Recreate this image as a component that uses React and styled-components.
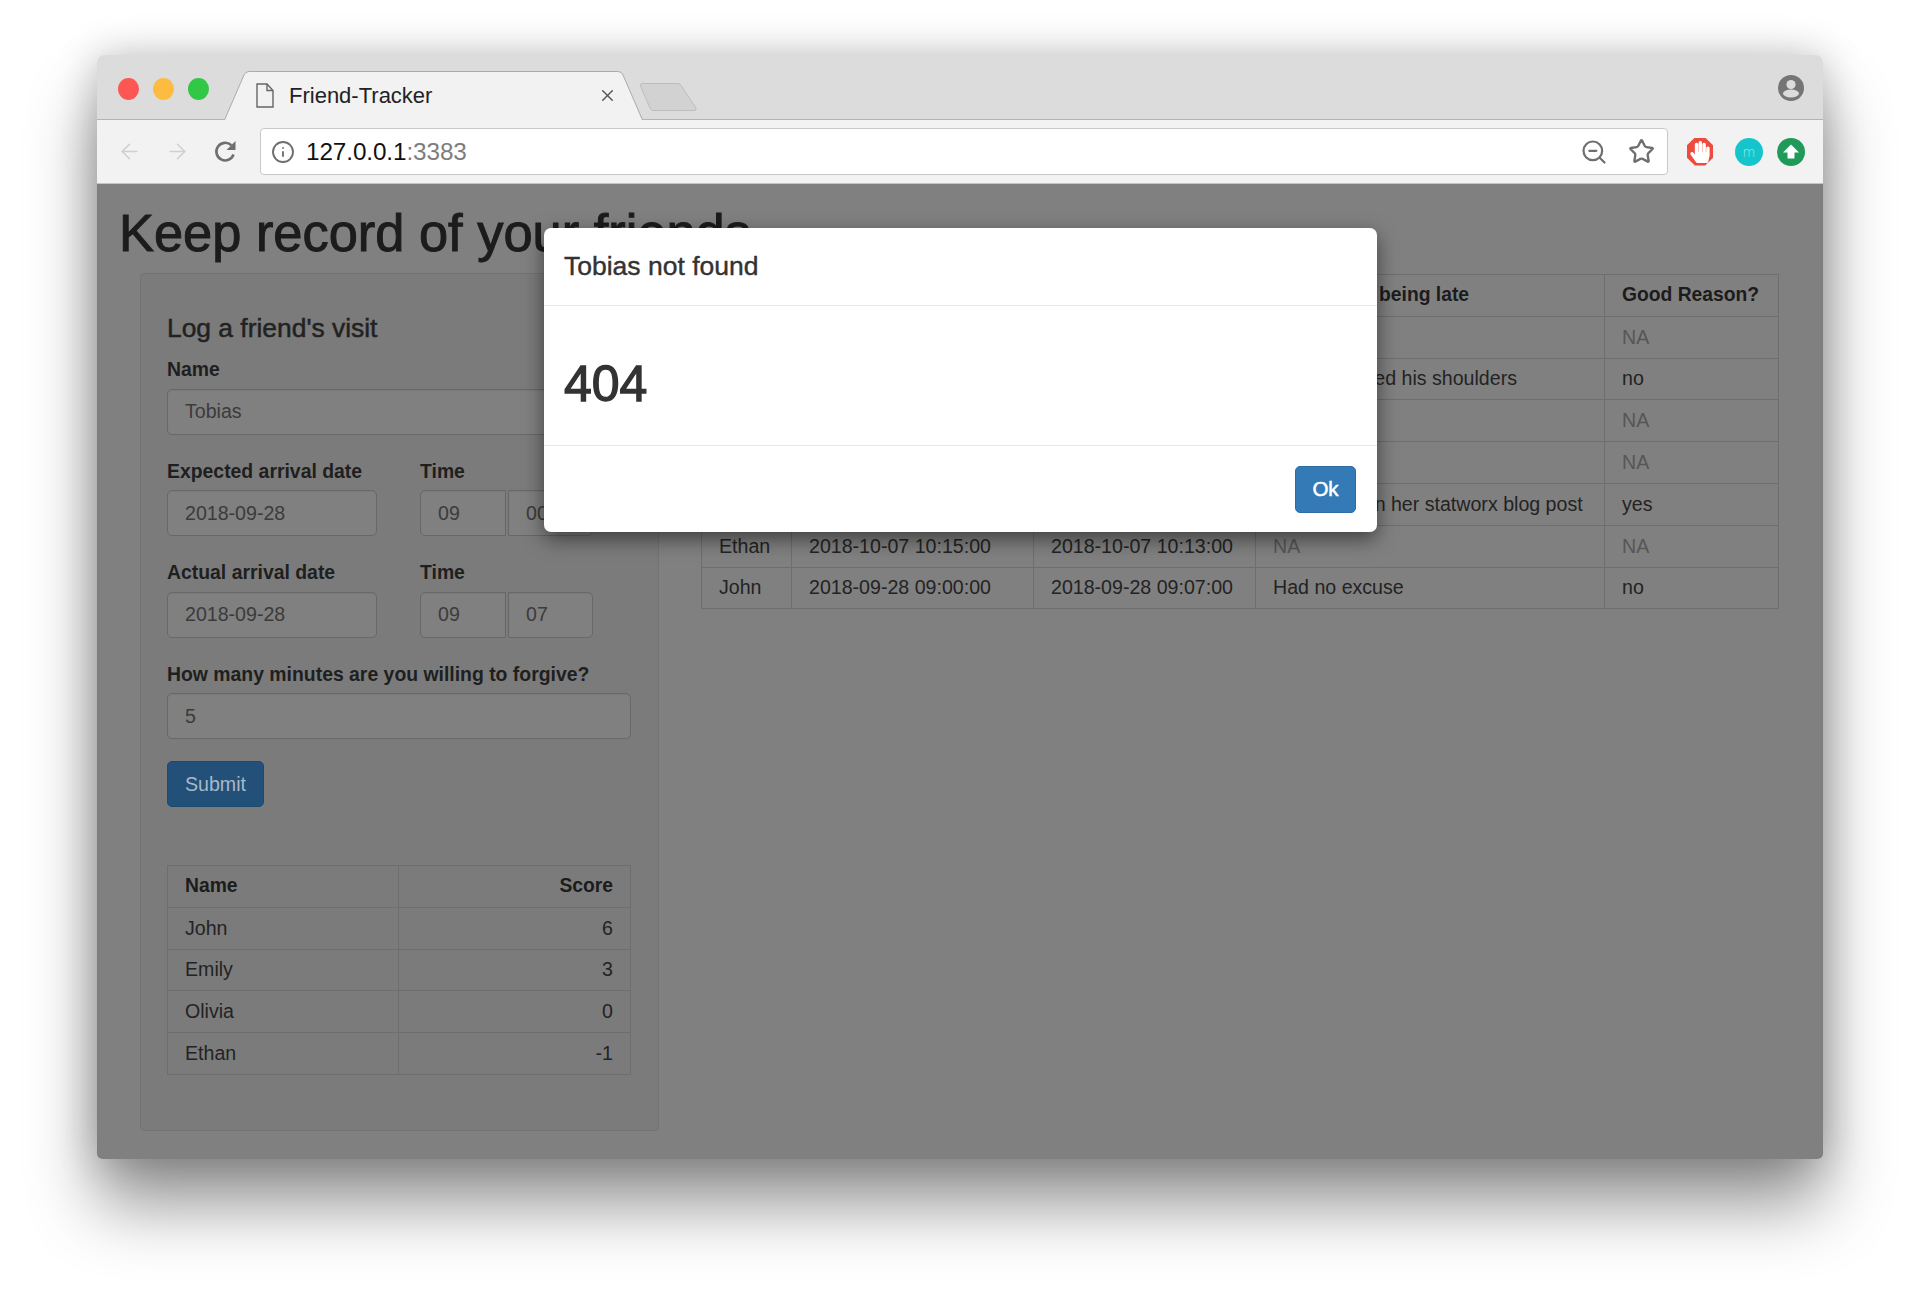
import React from "react";
import styled, { createGlobalStyle } from "styled-components";
import { ArrowLeft, ArrowRight, Info, ZoomOut, Star, X } from "lucide-react";
import { FaHandPaper } from "react-icons/fa";

const GlobalStyle = createGlobalStyle`
  html, body {
    margin: 0;
    background: #ffffff;
    font-family: "Liberation Sans", Arial, sans-serif;
    color: #1f1f1f;
  }
  * { box-sizing: border-box; }
`;

const Stage = styled.div`
  height: 1298px;
  padding: 55px 97px 139px;
  overflow: hidden;
`;

const BrowserWindow = styled.div`
  position: relative;
  height: 1104px;
  border-radius: 7px 7px 5px 5px;
  overflow: hidden;
`;

const WindowShadow = styled.div`
  border-radius: 7px 7px 5px 5px;
  box-shadow: 0 46px 68px rgba(0, 0, 0, 0.42), 0 0 40px rgba(0, 0, 0, 0.22);
`;

const TitleBar = styled.div`
  display: flex;
  align-items: center;
  height: 65px;
  padding: 0 19px 0 21px;
  background: #dcdcdc;
  border-bottom: 1px solid #b4b4b4;
`;

const Light = styled.span`
  width: 21px;
  height: 22px;
  margin: 4px 14px 0 0;
  border-radius: 50%;
  background: ${(p) => p.$color};
`;

const Tab = styled.div`
  position: relative;
  display: flex;
  align-items: center;
  align-self: flex-end;
  width: 419px;
  height: 49px;
  margin: 0 0 -1px 1px;
  padding: 0 26px 0 32px;
  font-size: 22px;
  color: #222222;
`;

const TabShape = styled.svg`
  position: absolute;
  left: 0;
  top: 0;
`;

const TabIcon = styled.svg`
  position: relative;
  flex: none;
  margin-right: 15px;
`;

const TabTitle = styled.span`
  position: relative;
`;

const TabClose = styled.span`
  position: relative;
  display: flex;
  margin-left: auto;
  color: #555555;
`;

const NewTab = styled.svg`
  align-self: flex-end;
  margin: 0 0 8px -3px;
`;

const Profile = styled.svg`
  margin: 2px 0 0 auto;
`;

const ToolBar = styled.div`
  display: flex;
  align-items: center;
  height: 64px;
  padding-left: 8px;
  background: #f2f2f2;
  border-bottom: 1px solid #c4c4c4;
`;

const NavButton = styled.span`
  display: flex;
  justify-content: center;
  width: 48px;
  color: ${(p) => (p.$off ? "#cfcfcf" : "#6f6f6f")};
`;

const AddressBar = styled.div`
  display: flex;
  flex: 1;
  align-items: center;
  height: 47px;
  margin-left: 11px;
  padding: 0 12px 0 10px;
  background: #ffffff;
  border: 1px solid #c8c8c8;
  border-radius: 4px;
  color: #6f6f6f;
`;

const Url = styled.span`
  margin: 0 auto 0 11px;
  font-size: 24.3px;
  letter-spacing: -0.1px;
  color: #111111;
`;

const UrlPort = styled.span`
  color: #7d7d7d;
`;

const BarAction = styled.span`
  display: flex;
  margin-left: ${(p) => p.$gap || 0}px;
`;

const Extensions = styled.div`
  display: flex;
  align-items: center;
  gap: 14px;
  margin-left: 19px;
  padding-right: 18px;
`;

const AdBlock = styled.span`
  display: flex;
  align-items: center;
  justify-content: center;
  width: 26px;
  height: 28px;
  margin-right: 8px;
  background: #ee4b40;
  clip-path: polygon(30% 0, 70% 0, 100% 28%, 100% 72%, 70% 100%, 30% 100%, 0 72%, 0 28%);
  color: #ffffff;
`;

const TealBadge = styled.span`
  display: flex;
  align-items: center;
  justify-content: center;
  width: 28px;
  height: 28px;
  border-radius: 50%;
  background: #14c6cb;
  color: #8fe6e8;
  font-family: "Open Sans", sans-serif;
  font-size: 14px;
  font-weight: 300;
`;

const Page = styled.div`
  height: 975px;
  padding: 23px 45px 0 22px;
  background: #808080;
`;

const Heading = styled.h1`
  margin: 0 0 14px;
  font-size: 52.4px;
  line-height: 52px;
  font-weight: 400;
  color: #1c1c1c;
  -webkit-text-stroke: 1px #1c1c1c;
`;

const Columns = styled.div`
  display: grid;
  grid-template-columns: 519px 1077px;
  gap: 42px;
  margin-left: 21px;
`;

const Panel = styled.section`
  padding: 39px 27px 55px 26px;
  background: #7b7b7b;
  border: 1px solid #737373;
  border-radius: 4px;
`;

const PanelTitle = styled.h4`
  margin: 0 0 16px;
  font-size: 26.4px;
  line-height: 30px;
  font-weight: 400;
  color: #222222;
  -webkit-text-stroke: 0.5px #222222;
`;

const Field = styled.div`
  margin-bottom: 26px;
`;

const FieldRow = styled.div`
  display: grid;
  grid-template-columns: 210px 173px;
  gap: 43px;
  margin-bottom: 26px;
`;

const Label = styled.label`
  display: block;
  margin-bottom: 9.5px;
  font-size: 19.4px;
  line-height: 20px;
  font-weight: 700;
  color: #1f1f1f;
`;

const Input = styled.input`
  display: block;
  width: 100%;
  height: 46px;
  padding: 0 17px;
  background: #808080;
  border: 1px solid #686868;
  border-radius: ${(p) => p.$radius || "5px"};
  box-shadow: inset 0 1px 1px rgba(0, 0, 0, 0.05);
  font-family: inherit;
  font-size: 19.6px;
  color: #3b3b3b;
  outline: none;
`;

const TimeInputs = styled.div`
  display: grid;
  grid-template-columns: 86px 85px;
  gap: 2px;
`;

const SubmitButton = styled.button`
  display: block;
  width: 97px;
  height: 46px;
  margin: -4px 0 58px;
  padding: 0;
  background: #225078;
  border: 1px solid #1f4a6c;
  border-radius: 5px;
  font-family: inherit;
  font-size: 19.6px;
  color: #a9b8c7;
`;

const DataTable = styled.table`
  width: 100%;
  table-layout: fixed;
  border-collapse: collapse;
  font-size: 19.6px;
`;

const HeadCell = styled.th`
  height: 41.8px;
  padding: 0 17px;
  border: 1px solid #6e6e6e;
  font-size: 19.3px;
  font-weight: 700;
  color: #1c1c1c;
  text-align: ${(p) => (p.$right ? "right" : "left")};
  white-space: nowrap;
`;

const Cell = styled.td`
  height: 41.8px;
  padding: 0 17px;
  border: 1px solid #6e6e6e;
  color: ${(p) => (p.$na ? "#565656" : "#232323")};
  text-align: ${(p) => (p.$right ? "right" : "left")};
  white-space: nowrap;
`;

const Col = styled.col`
  width: ${(p) => p.$width}px;
`;

const TableColumn = styled.div`
  padding-top: 1px;
`;

const Modal = styled.div`
  position: absolute;
  left: 447px;
  top: 173px;
  display: flex;
  flex-direction: column;
  width: 833px;
  height: 304px;
  background: #ffffff;
  border-radius: 7px;
  box-shadow: 0 7px 20px rgba(0, 0, 0, 0.5);
`;

const ModalHeader = styled.div`
  display: flex;
  align-items: center;
  height: 78px;
  padding: 0 20px;
  border-bottom: 1px solid #e7e7e7;
  font-size: 26.5px;
  color: #333333;
  -webkit-text-stroke: 0.4px #333333;
`;

const ModalBody = styled.div`
  display: flex;
  align-items: center;
  height: 140px;
  padding: 17px 20px 0;
  border-bottom: 1px solid #e7e7e7;
`;

const ModalCode = styled.h3`
  margin: 0;
  font-size: 50px;
  line-height: 52px;
  font-weight: 400;
  color: #333333;
  -webkit-text-stroke: 1.3px #333333;
`;

const ModalFooter = styled.div`
  display: flex;
  flex: 1;
  align-items: center;
  justify-content: flex-end;
  padding-right: 21px;
`;

const OkButton = styled.button`
  width: 61px;
  height: 47px;
  padding: 0;
  background: #337ab7;
  border: 1px solid #2e6da4;
  border-radius: 5px;
  font-family: inherit;
  font-size: 20.5px;
  color: #ffffff;
  -webkit-text-stroke: 0.5px #ffffff;
`;

const visits = [
  ["Emily", "2018-10-12 16:00:00", "2018-10-12 16:00:00", "NA", "NA"],
  ["John", "2018-10-10 19:30:00", "2018-10-10 19:36:00", "Just shrugged his shoulders", "no"],
  ["Olivia", "2018-10-09 12:00:00", "2018-10-09 12:00:00", "NA", "NA"],
  ["Ethan", "2018-10-08 18:00:00", "2018-10-08 17:58:00", "NA", "NA"],
  ["Emily", "2018-10-07 20:00:00", "2018-10-07 20:12:00", "Was busy on her statworx blog post", "yes"],
  ["Ethan", "2018-10-07 10:15:00", "2018-10-07 10:13:00", "NA", "NA"],
  ["John", "2018-09-28 09:00:00", "2018-09-28 09:07:00", "Had no excuse", "no"],
];

const scores = [
  ["John", "6"],
  ["Emily", "3"],
  ["Olivia", "0"],
  ["Ethan", "-1"],
];

const BrowserChrome = () => (
  <>
    <TitleBar>
      <Light $color="#fc5753" />
      <Light $color="#fdbc40" />
      <Light $color="#33c748" />
      <Tab>
        <TabShape width="419" height="49" viewBox="0 0 419 49">
          <path
            d="M0.5 49 L20 4 Q21.5 0.5 25 0.5 H394 Q397.5 0.5 399 4 L418.5 49"
            fill="#f2f2f2"
            stroke="#ababab"
          />
        </TabShape>
        <TabIcon width="18" height="25" viewBox="0 0 18 25" fill="none" stroke="#666666" strokeWidth="1.4">
          <path d="M1 1h10l6 6.5V24H1z" />
          <path d="M11 1v6.5h6" />
        </TabIcon>
        <TabTitle>Friend-Tracker</TabTitle>
        <TabClose>
          <X size={19} strokeWidth={1.8} />
        </TabClose>
      </Tab>
      <NewTab width="57" height="28" viewBox="0 0 57 28">
        <path d="M2 0.5 H38 Q40 0.5 41 2.5 L56 25 Q57 27.5 54 27.5 H13 Q11 27.5 10 25 L0.5 3 Q0 0.5 2 0.5z" fill="#d2d2d2" stroke="#bdbdbd" />
      </NewTab>
      <Profile width="26" height="26" viewBox="0 0 26 26">
        <circle cx="13" cy="13" r="13" fill="#757575" />
        <circle cx="13" cy="9.5" r="4.6" fill="#dcdcdc" />
        <ellipse cx="13" cy="18.5" rx="8" ry="4" fill="#dcdcdc" />
      </Profile>
    </TitleBar>
    <ToolBar>
      <NavButton $off>
        <ArrowLeft size={25} strokeWidth={1.5} />
      </NavButton>
      <NavButton $off>
        <ArrowRight size={25} strokeWidth={1.5} />
      </NavButton>
      <NavButton>
        <svg width="27" height="27" viewBox="0 0 27 27" fill="none">
          <path d="M21.5 16.5a8.8 8.8 0 1 1-2.2-9.2" stroke="#6f6f6f" strokeWidth="2.6" />
          <path d="M23.5 3v9h-9z" fill="#6f6f6f" />
        </svg>
      </NavButton>
      <AddressBar>
        <Info size={24} strokeWidth={1.9} />
        <Url>
          127.0.0.1<UrlPort>:3383</UrlPort>
        </Url>
        <BarAction>
          <ZoomOut size={28} strokeWidth={1.9} />
        </BarAction>
        <BarAction $gap={20}>
          <Star size={27} strokeWidth={2.1} />
        </BarAction>
      </AddressBar>
      <Extensions>
        <AdBlock>
          <FaHandPaper size={22} />
        </AdBlock>
        <TealBadge>m</TealBadge>
        <svg width="28" height="28" viewBox="0 0 28 28">
          <circle cx="14" cy="14" r="14" fill="#1f9a58" />
          <path d="M14 6.5 L22 14.5 H17.5 V20.5 H10.5 V14.5 H6z" fill="#ffffff" />
        </svg>
      </Extensions>
    </ToolBar>
  </>
);

const VisitForm = () => (
  <Panel>
    <PanelTitle>Log a friend's visit</PanelTitle>
    <Field>
      <Label>Name</Label>
      <Input readOnly value="Tobias" />
    </Field>
    <FieldRow>
      <div>
        <Label>Expected arrival date</Label>
        <Input readOnly value="2018-09-28" />
      </div>
      <div>
        <Label>Time</Label>
        <TimeInputs>
          <Input readOnly value="09" $radius="5px 0 0 5px" />
          <Input readOnly value="00" $radius="0 5px 5px 0" />
        </TimeInputs>
      </div>
    </FieldRow>
    <FieldRow>
      <div>
        <Label>Actual arrival date</Label>
        <Input readOnly value="2018-09-28" />
      </div>
      <div>
        <Label>Time</Label>
        <TimeInputs>
          <Input readOnly value="09" $radius="5px 0 0 5px" />
          <Input readOnly value="07" $radius="0 5px 5px 0" />
        </TimeInputs>
      </div>
    </FieldRow>
    <Field>
      <Label>How many minutes are you willing to forgive?</Label>
      <Input readOnly value="5" />
    </Field>
    <SubmitButton>Submit</SubmitButton>
    <DataTable>
      <colgroup>
        <Col $width={231} />
        <Col $width={232} />
      </colgroup>
      <thead>
        <tr>
          <HeadCell>Name</HeadCell>
          <HeadCell $right>Score</HeadCell>
        </tr>
      </thead>
      <tbody>
        {scores.map(([name, score]) => (
          <tr key={name}>
            <Cell>{name}</Cell>
            <Cell $right>{score}</Cell>
          </tr>
        ))}
      </tbody>
    </DataTable>
  </Panel>
);

const VisitTable = () => (
  <TableColumn>
    <DataTable>
      <colgroup>
        <Col $width={90} />
        <Col $width={242} />
        <Col $width={222} />
        <Col $width={349} />
        <Col $width={174} />
      </colgroup>
      <thead>
        <tr>
          <HeadCell>Name</HeadCell>
          <HeadCell>Expected arrival</HeadCell>
          <HeadCell>Actual arrival</HeadCell>
          <HeadCell>Reason for being late</HeadCell>
          <HeadCell>Good Reason?</HeadCell>
        </tr>
      </thead>
      <tbody>
        {visits.map((row, i) => (
          <tr key={i}>
            {row.map((value, j) => (
              <Cell key={j} $na={value === "NA"}>
                {value}
              </Cell>
            ))}
          </tr>
        ))}
      </tbody>
    </DataTable>
  </TableColumn>
);

export default function App() {
  return (
    <>
      <GlobalStyle />
      <Stage>
        <WindowShadow>
          <BrowserWindow>
            <BrowserChrome />
            <Page>
              <Heading>Keep record of your friends</Heading>
              <Columns>
                <VisitForm />
                <VisitTable />
              </Columns>
            </Page>
            <Modal>
              <ModalHeader>Tobias not found</ModalHeader>
              <ModalBody>
                <ModalCode>404</ModalCode>
              </ModalBody>
              <ModalFooter>
                <OkButton>Ok</OkButton>
              </ModalFooter>
            </Modal>
          </BrowserWindow>
        </WindowShadow>
      </Stage>
    </>
  );
}
